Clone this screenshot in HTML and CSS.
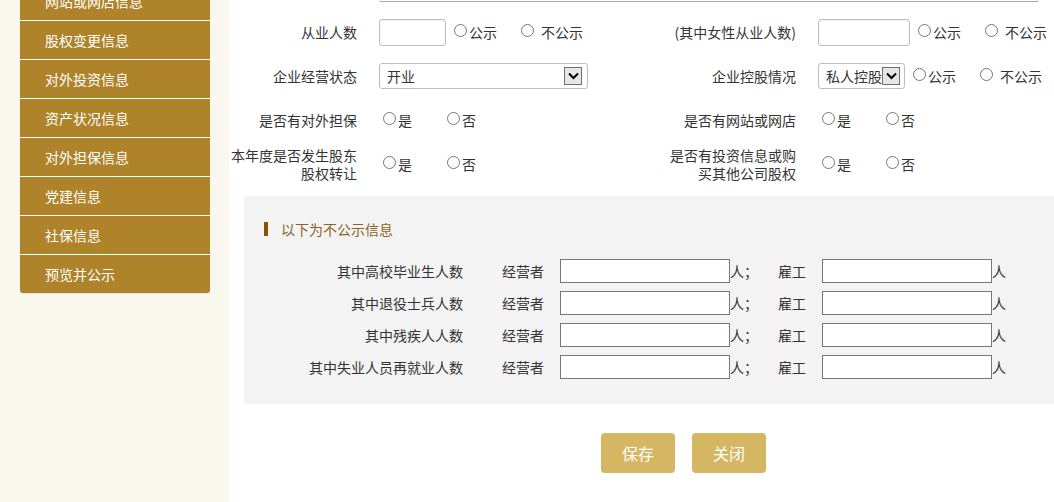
FILE: index.html
```html
<!DOCTYPE html>
<html lang="zh-CN">
<head>
  <meta charset="UTF-8">
  <title>年度报告填报</title>
  <link rel="stylesheet" href="styles.css">
</head>
<body>
  <div class="page">
    <aside class="side">
      <ul class="menu">
        <li>网站或网店信息</li>
        <li>股权变更信息</li>
        <li>对外投资信息</li>
        <li>资产状况信息</li>
        <li>对外担保信息</li>
        <li>党建信息</li>
        <li>社保信息</li>
        <li>预览并公示</li>
      </ul>
    </aside>

    <main class="main">
      <div class="prev-field"></div>

      <div class="form-grid">
        <label class="lbl">从业人数</label>
        <div class="field">
          <input type="text" class="txt txt-s">
          <label class="opt first"><input type="radio" name="r1">公示</label>
          <label class="opt wide"><input type="radio" name="r1">不公示</label>
        </div>
        <label class="lbl">(其中女性从业人数)</label>
        <div class="field">
          <input type="text" class="txt txt-m">
          <label class="opt first"><input type="radio" name="r2">公示</label>
          <label class="opt wide"><input type="radio" name="r2">不公示</label>
        </div>

        <label class="lbl">企业经营状态</label>
        <div class="field">
          <div class="select sel-l"><span class="sel-text">开业</span><span class="arrow"><svg width="11" height="8" viewBox="0 0 11 8"><path d="M1 1.5 L5.5 6 L10 1.5" fill="none" stroke="#000" stroke-width="2"/></svg></span></div>
        </div>
        <label class="lbl">企业控股情况</label>
        <div class="field">
          <div class="select sel-s"><span class="sel-text">私人控股</span><span class="arrow"><svg width="11" height="8" viewBox="0 0 11 8"><path d="M1 1.5 L5.5 6 L10 1.5" fill="none" stroke="#000" stroke-width="2"/></svg></span></div>
          <label class="opt first"><input type="radio" name="r3">公示</label>
          <label class="opt wide"><input type="radio" name="r3">不公示</label>
        </div>

        <label class="lbl">是否有对外担保</label>
        <div class="field">
          <label class="opt yes"><input type="radio" name="r4">是</label>
          <label class="opt no"><input type="radio" name="r4">否</label>
        </div>
        <label class="lbl">是否有网站或网店</label>
        <div class="field">
          <label class="opt yes"><input type="radio" name="r5">是</label>
          <label class="opt no"><input type="radio" name="r5">否</label>
        </div>

        <label class="lbl two">本年度是否发生股东<br>股权转让</label>
        <div class="field">
          <label class="opt yes"><input type="radio" name="r6">是</label>
          <label class="opt no"><input type="radio" name="r6">否</label>
        </div>
        <label class="lbl two">是否有投资信息或购<br>买其他公司股权</label>
        <div class="field">
          <label class="opt yes"><input type="radio" name="r7">是</label>
          <label class="opt no"><input type="radio" name="r7">否</label>
        </div>
      </div>

      <div class="private-box">
        <h3 class="box-title"><span class="mark"></span>以下为不公示信息</h3>
        <div class="box-row">
          <span class="row-lbl">其中高校毕业生人数</span>
          <span class="who">经营者</span><input type="text" class="num"><span class="unit">人；</span>
          <span class="who hire">雇工</span><input type="text" class="num"><span class="unit">人</span>
        </div>
        <div class="box-row">
          <span class="row-lbl">其中退役士兵人数</span>
          <span class="who">经营者</span><input type="text" class="num"><span class="unit">人；</span>
          <span class="who hire">雇工</span><input type="text" class="num"><span class="unit">人</span>
        </div>
        <div class="box-row">
          <span class="row-lbl">其中残疾人人数</span>
          <span class="who">经营者</span><input type="text" class="num"><span class="unit">人；</span>
          <span class="who hire">雇工</span><input type="text" class="num"><span class="unit">人</span>
        </div>
        <div class="box-row">
          <span class="row-lbl">其中失业人员再就业人数</span>
          <span class="who">经营者</span><input type="text" class="num"><span class="unit">人；</span>
          <span class="who hire">雇工</span><input type="text" class="num"><span class="unit">人</span>
        </div>
      </div>

      <div class="actions">
        <button type="button" class="btn">保存</button>
        <button type="button" class="btn">关闭</button>
      </div>
    </main>
  </div>
</body>
</html>
```

FILE: styles.css
```css
body {
  margin: 0;
  font-family: "Noto Sans CJK SC", "Liberation Sans", sans-serif;
  font-size: 14px;
  color: #333;
  background: #fff;
  overflow: hidden;
}
.page {
  display: flex;
  min-height: 100vh;
}
.side {
  width: 229px;
  flex-shrink: 0;
  background: #faf7ef;
}
.menu {
  list-style: none;
  margin: -18px 0 0 20px;
  padding: 0;
  width: 190px;
  border-radius: 0 0 3px 3px;
  overflow: hidden;
  box-shadow: 0 1px 1px rgba(0,0,0,0.08);
}
.menu li {
  height: 38px;
  line-height: 38px;
  padding-left: 25px;
  background: #ae832a;
  color: #fff;
  border-bottom: 1px solid #fff;
}
.menu li:last-child {
  border-bottom: none;
}
.main {
  flex: 1;
}
.prev-field {
  margin: 0 0 8px 150px;
  width: 660px;
  height: 1px;
  border-bottom: 1px solid #aaa;
  border-radius: 0 0 3px 3px;
}
.form-grid {
  display: grid;
  grid-template-columns: 150px 289px 150px 1fr;
  grid-auto-rows: 44px;
  align-items: center;
}
.lbl {
  text-align: right;
  padding-right: 22px;
  line-height: 18px;
}
.field {
  display: flex;
  align-items: center;
}
.txt {
  box-sizing: border-box;
  height: 27px;
  border: 1px solid #bdbdbd;
  border-radius: 3px;
  box-shadow: inset 0 1px 2px rgba(0,0,0,0.06);
  margin: 0;
}
.txt-s { width: 67px; }
.txt-m { width: 92px; }
.opt {
  display: inline-flex;
  align-items: center;
  line-height: 17px;
}
.opt input {
  width: 13px;
  height: 13px;
  margin: -3px 2px 0 0;
}
.opt.first { margin-left: 8px; }
.opt.wide { margin-left: 24px; }
.opt.wide input { margin-right: 7px; }
.opt.yes { margin-left: 4px; }
.opt.no { margin-left: 35px; }
.select {
  box-sizing: border-box;
  display: flex;
  align-items: center;
  height: 26px;
  border: 1px solid #bdbdbd;
  border-radius: 3px;
  padding-left: 7px;
  overflow: hidden;
  white-space: nowrap;
}
.sel-l { width: 209px; }
.sel-s { width: 87px; }
.arrow {
  box-sizing: border-box;
  display: flex;
  align-items: center;
  justify-content: center;
  flex-shrink: 0;
  width: 18px;
  height: 18px;
  margin-left: auto;
  margin-right: 5px;
  border: 1px solid #707070;
  background: #e6e6e6;
}
.sel-s .arrow { margin-left: 0; margin-right: 3px; }
.private-box {
  margin: 10px 0 0 15px;
  background: #f3f3f3;
  padding: 23px 0 21px 20px;
}
.box-title {
  display: flex;
  align-items: center;
  margin: 0 0 16px;
  height: 20px;
  font-size: 14px;
  font-weight: normal;
  color: #8a6324;
}
.mark {
  width: 4px;
  height: 14px;
  background: #8b5200;
  margin-right: 13px;
}
.box-row {
  display: flex;
  align-items: center;
  height: 32px;
}
.row-lbl {
  width: 199px;
  text-align: right;
}
.who { margin-left: 39px; }
.who.hire { margin-left: 20px; }
.num {
  box-sizing: border-box;
  width: 170px;
  height: 24px;
  margin: 0 0 0 16px;
  border: 1px solid #767676;
  background: #fff;
}
.actions {
  display: flex;
  gap: 17px;
  margin-top: 29px;
  padding-left: 372px;
}
.btn {
  width: 74px;
  height: 40px;
  border: none;
  border-radius: 4px;
  background: #d5b662;
  color: #fff;
  font-family: inherit;
  font-size: 16px;
  cursor: pointer;
}
.btn:hover {
  background: #c9a64e;
}
```
